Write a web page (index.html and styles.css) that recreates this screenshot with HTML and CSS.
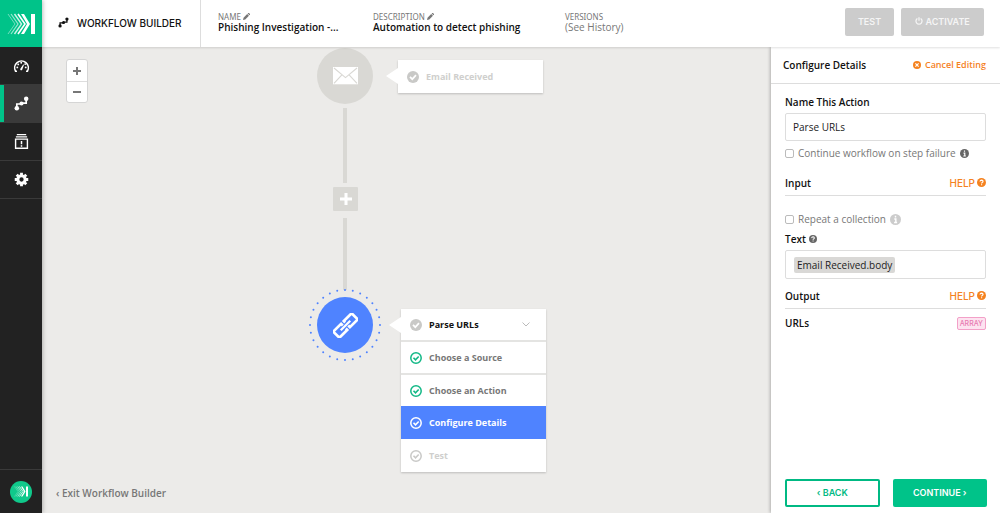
FILE: index.html
```html
<!DOCTYPE html>
<html lang="en">
<head>
<meta charset="UTF-8" />
<meta name="viewport" content="width=device-width, initial-scale=1" />
<title>Workflow Builder</title>
<link rel="stylesheet" href="styles.css">
</head>
<body>

<!-- shared icons -->
<svg class="sprite" aria-hidden="true">
  <symbol id="logo" viewBox="0 0 28 22">
    <g fill="none" stroke="currentColor">
      <path d="M1 1l7 10L1 21" stroke-width="1" opacity=".45" />
      <path d="M4 1l7 10L4 21" stroke-width="1.200" opacity=".6" />
      <path d="M7.500 1l7 10-7 10" stroke-width="1.400" opacity=".8" />
      <path d="M11 1l7 10-7 10" stroke-width="1.600" />
    </g>
    <path d="M14 1h3l6 10-6 10h-3l6-10zM24 1h4v20h-4z" fill="currentColor" />
  </symbol>
  <symbol id="flow" viewBox="0 0 16 16">
    <path d="M3 12V8.500h5.500V7.500H13V4" fill="none" stroke="currentColor" stroke-width="1.800" />
    <circle cx="3" cy="13" r="2.400" fill="currentColor" />
    <circle cx="8" cy="8" r="2.200" fill="currentColor" />
    <circle cx="13" cy="3" r="2.400" fill="currentColor" />
  </symbol>
  <symbol id="check-solid" viewBox="0 0 12 12">
    <circle cx="6" cy="6" r="6" fill="currentColor" />
    <path d="M3 5.800l2.300 2.400L9 4.200" fill="none" stroke="#fff" stroke-width="1.700" />
  </symbol>
  <symbol id="check-ring" viewBox="0 0 12 12">
    <circle cx="6" cy="6" r="5.200" fill="none" stroke="currentColor" stroke-width="1.500" />
    <path d="M3.500 5.800l2 2L8.700 4.500" fill="none" stroke="currentColor" stroke-width="1.600" />
  </symbol>
  <symbol id="pencil" viewBox="0 0 8 8">
    <path d="M0 8l.6-2.600L4.800 1.200l2 2L2.600 7.400zM5.300.7L6 0q.4-.3.800 0l1.200 1.200q.3.400 0 .8l-.7.7z" fill="currentColor" />
  </symbol>
  <symbol id="help" viewBox="0 0 10 10">
    <circle cx="5" cy="5" r="5" fill="currentColor" />
    <path d="M3.300 3.900q.2-1.600 1.800-1.600 1.600.1 1.600 1.400 0 .8-.9 1.200-.7.400-.7 1.100M5.100 6.900v1.200" fill="none" stroke="#fff" stroke-width="1.300" />
  </symbol>
  <symbol id="info" viewBox="0 0 10 10">
    <circle cx="5" cy="5" r="5" fill="currentColor" />
    <path d="M5 1.700v1.400M3.900 4.500H5.300V7.800M3.700 7.800h2.800" fill="none" stroke="#fff" stroke-width="1.300" />
  </symbol>
</svg>

<div class="app">
  <nav class="sidebar">
    <a class="brand" href="#" aria-label="Home"><svg><use href="#logo" /></svg></a>
    <a class="nav-item" href="#" aria-label="Dashboard">
      <svg viewBox="0 0 18 16">
        <path d="M4.200 14.200H2.700A7.300 7.300 0 1 1 15.300 14.200H13.800" fill="none" stroke="currentColor" stroke-width="1.700" />
        <path d="M7.600 11.800l3.200-5 .9.500-2.100 5.500a1.200 1.200 0 0 1-2-1z" fill="currentColor" />
        <g fill="currentColor"><circle cx="4.500" cy="10" r="1" /><circle cx="5.500" cy="6.800" r="1" /><circle cx="8.700" cy="5" r="1" /><circle cx="13.500" cy="10" r="1" /><circle cx="12.900" cy="6.500" r="1" /></g>
      </svg>
    </a>
    <a class="nav-item active" href="#" aria-label="Workflows"><svg><use href="#flow" /></svg></a>
    <a class="nav-item" href="#" aria-label="Cases">
      <svg viewBox="0 0 16 16" fill="none" stroke="currentColor">
        <path d="M3 .7h10M2 3h12" stroke-width="1.200" />
        <path d="M1.700 5.500h12.600v9.700H1.700z" stroke-width="1.500" />
        <path d="M8 7.500v3.500M8 12v1.500" stroke-width="1.600" />
      </svg>
    </a>
    <a class="nav-item" href="#" aria-label="Settings">
      <svg viewBox="0 0 16 16">
        <circle cx="8" cy="8" r="3.900" fill="none" stroke="currentColor" stroke-width="3.200" />
        <path d="M8 .8v2.400M8 12.800v2.400M.8 8h2.400M12.800 8h2.400M2.900 2.900l1.700 1.700M11.400 11.400l1.700 1.700M2.900 13.100l1.700-1.700M11.400 4.600l1.700-1.700" stroke="currentColor" stroke-width="3" />
      </svg>
    </a>
    <a class="account" href="#" aria-label="Account"><span class="avatar"><svg><use href="#logo" /></svg></span></a>
  </nav>

  <header class="topbar">
    <div class="page-title">
      <svg><use href="#flow" /></svg>
      <h1>WORKFLOW BUILDER</h1>
    </div>
    <dl class="meta">
      <div class="meta-item">
        <dt>NAME <svg><use href="#pencil" /></svg></dt>
        <dd>Phishing Investigation -...</dd>
      </div>
      <div class="meta-item wide">
        <dt>DESCRIPTION <svg><use href="#pencil" /></svg></dt>
        <dd>Automation to detect phishing</dd>
      </div>
      <div class="meta-item">
        <dt>VERSIONS</dt>
        <dd><a href="#">(See History)</a></dd>
      </div>
    </dl>
    <div class="top-actions">
      <button type="button" class="btn btn-muted">TEST</button>
      <button type="button" class="btn btn-muted">
        <svg viewBox="0 0 10 10" fill="none" stroke="currentColor" stroke-width="1.600"><path d="M3 1.900a3.800 3.800 0 1 0 4 0M5 .3v4.500" /></svg>
        ACTIVATE
      </button>
    </div>
  </header>

  <main class="canvas">
    <div class="zoom-controls">
      <button type="button" aria-label="Zoom in"><svg viewBox="0 0 10 10"><path d="M5 1v8M1 5h8" /></svg></button>
      <button type="button" aria-label="Zoom out"><svg viewBox="0 0 10 10"><path d="M1 5h8" /></svg></button>
    </div>

    <div class="node node-email">
      <svg viewBox="0 0 26 18">
        <path d="M0 0h26v18H0z" fill="#fff" />
        <path d="M1 1l12 10L25 1M1 17l8.500-9M25 17l-8.500-9" fill="none" stroke="#d9d8d4" stroke-width="1.200" />
      </svg>
    </div>
    <div class="link link-top"></div>
    <button type="button" class="add-step" aria-label="Add step"><svg viewBox="0 0 12 12"><path d="M6 0v12M0 6h12" /></svg></button>
    <div class="link link-bottom"></div>
    <div class="node node-parse">
      <svg class="ring" viewBox="0 0 72 72"><circle cx="36" cy="36" r="35" pathLength="28" /></svg>
      <svg viewBox="0 0 26 26" fill="none" stroke="#fff" stroke-width="2.800">
        <g transform="rotate(-45 13 13)">
          <path d="M11 11V8.500H-.5v9H11V15.500M15 15v2.500h11.500v-9H15v2" />
          <path d="M6 13h14" stroke-width="2.400" />
        </g>
      </svg>
    </div>

    <div class="step-card card-email">
      <div class="step faded"><svg><use href="#check-solid" /></svg>Email Received</div>
    </div>

    <div class="step-card card-parse">
      <div class="step current">
        <svg><use href="#check-solid" /></svg>Parse URLs
        <svg class="chevron" viewBox="0 0 8 5"><path d="M.5.5L4 4 7.500.5" /></svg>
      </div>
      <div class="step done"><svg><use href="#check-ring" /></svg>Choose a Source</div>
      <div class="step done"><svg><use href="#check-ring" /></svg>Choose an Action</div>
      <div class="step selected"><svg><use href="#check-ring" /></svg>Configure Details</div>
      <div class="step faded"><svg><use href="#check-ring" /></svg>Test</div>
    </div>

    <a class="exit" href="#">‹ Exit Workflow Builder</a>
  </main>

  <aside class="panel">
    <div class="panel-head">
      <h2>Configure Details</h2>
      <a href="#">
        <svg viewBox="0 0 10 10"><circle cx="5" cy="5" r="5" fill="currentColor" /><path d="M3 3l4 4M7 3L3 7" stroke="#fff" stroke-width="1.500" /></svg>
        Cancel Editing
      </a>
    </div>

    <form class="panel-body">
      <label class="field-label" for="action-name">Name This Action</label>
      <input type="text" id="action-name" value="Parse URLs" />
      <label class="check"><input type="checkbox" />Continue workflow on step failure <svg class="dark"><use href="#info" /></svg></label>

      <div class="section-head input-head">
        <h3>Input</h3>
        <a href="#">HELP <svg><use href="#help" /></svg></a>
      </div>
      <label class="check repeat"><input type="checkbox" />Repeat a collection <svg class="light"><use href="#info" /></svg></label>
      <span class="field-label" id="text-label">Text <svg><use href="#help" /></svg></span>
      <div class="token-box" role="textbox" aria-labelledby="text-label" contenteditable="true"><span class="token">Email Received.body</span></div>

      <div class="section-head">
        <h3>Output</h3>
        <a href="#">HELP <svg><use href="#help" /></svg></a>
      </div>
      <div class="output-row"><span>URLs</span><span class="tag">ARRAY</span></div>
    </form>

    <div class="panel-foot">
      <button type="button" class="btn btn-outline">‹ BACK</button>
      <button type="button" class="btn btn-primary">CONTINUE ›</button>
    </div>
  </aside>
</div>

</body>
</html>
```
FILE: styles.css
```css
* {
  box-sizing: border-box;
}
body {
  margin: 0;
  font-family: "Open Sans", "Noto Sans", sans-serif;
  font-size: 10px;
  line-height: 14px;
  color: #111;
}
h1, h2, h3, dl, dd {
  margin: 0;
}
a {
  color: inherit;
  text-decoration: none;
}
button, input {
  font: inherit;
}
button {
  cursor: pointer;
}
svg {
  flex: none;
}
.sprite {
  display: none;
}
.app {
  display: grid;
  grid-template-columns: 42px 1fr 229px;
  grid-template-rows: 47px 1fr;
  height: 100vh;
}

/* Sidebar */
.sidebar {
  grid-row: 1 / 3;
  display: flex;
  flex-direction: column;
  background: #222;
  color: #fff;
  box-shadow: 1px 0 4px rgba(0,0,0,0.25);
  z-index: 3;
}
.brand {
  height: 47px;
  display: flex;
  align-items: center;
  justify-content: center;
  background: #00c389;
}
.brand svg {
  width: 28px;
  height: 22px;
}
.nav-item {
  height: 38px;
  display: flex;
  align-items: center;
  justify-content: center;
  border-bottom: 1px solid #3a3a3a;
}
.nav-item svg {
  width: 17px;
  height: 15px;
}
.nav-item.active {
  background: #3a3a3a;
  box-shadow: inset 4px 0 #00c389;
}
.account {
  margin-top: auto;
  height: 44px;
  display: flex;
  align-items: center;
  justify-content: center;
  border-top: 1px solid #3a3a3a;
}
.avatar {
  width: 22px;
  height: 22px;
  display: flex;
  align-items: center;
  justify-content: center;
  border-radius: 50%;
  background: #10c98b;
}
.avatar svg {
  width: 14px;
  height: 11px;
}

/* Top bar */
.topbar {
  grid-column: 2 / 4;
  display: flex;
  background: #fff;
  box-shadow: 0 1px 2px rgba(0,0,0,0.12);
  z-index: 2;
}
.page-title {
  width: 159px;
  display: flex;
  align-items: center;
  gap: 8px;
  padding-left: 16px;
  padding-bottom: 2px;
  border-right: 1px solid #ddd;
}
.page-title svg {
  width: 11px;
  height: 11px;
}
.page-title h1 {
  font-family: Inter, sans-serif;
  font-size: 10px;
  font-weight: 500;
  white-space: nowrap;
}
.meta {
  display: flex;
  gap: 35px;
  padding: 11px 0 0 17px;
  white-space: nowrap;
}
.meta-item {
  width: 120px;
}
.meta-item.wide {
  width: 157px;
}
.meta dt {
  font-family: "Noto Sans", sans-serif;
  font-size: 8px;
  line-height: 11px;
  color: #777;
}
.meta dt svg {
  width: 7px;
  height: 7px;
}
.meta dd {
  line-height: 11px;
  font-weight: 600;
}
.meta dd a {
  color: #777;
  font-weight: 500;
}
.btn {
  height: 28px;
  padding: 0;
  border: 0;
  border-radius: 2px;
  font-family: Inter, sans-serif;
  font-size: 9px;
  font-weight: 600;
}
.top-actions {
  display: flex;
  gap: 7px;
  margin-left: auto;
  padding: 8px 16px 0 0;
}
.btn-muted {
  width: 49px;
  background: #ccc;
  color: #f5f5f5;
}
.btn-muted + .btn-muted {
  width: 83px;
}
.btn-muted svg {
  width: 8px;
  height: 8px;
}

/* Canvas */
.canvas {
  position: relative;
  overflow: hidden;
  background: #ecebe9;
}
.zoom-controls {
  position: absolute;
  left: 24px;
  top: 12px;
  display: flex;
  flex-direction: column;
  width: 22px;
  background: #fff;
  border: 1px solid #d5d5d5;
  border-radius: 3px;
}
.zoom-controls button {
  height: 21px;
  padding: 0;
  display: flex;
  align-items: center;
  justify-content: center;
  border: 0;
  background: none;
}
.zoom-controls button + button {
  border-top: 1px solid #ddd;
}
.zoom-controls svg {
  width: 10px;
  height: 10px;
  stroke: #777;
  stroke-width: 2;
}
.node {
  position: absolute;
  left: 275px;
  width: 56px;
  height: 56px;
  display: flex;
  align-items: center;
  justify-content: center;
  border-radius: 50%;
}
.node-email {
  top: 1px;
  background: #d9d8d4;
}
.node-parse {
  top: 250px;
  background: #4f83ff;
}
.node svg {
  width: 25px;
}
.node .ring {
  position: absolute;
  left: -8px;
  top: -8px;
  width: 72px;
  height: 72px;
  overflow: visible;
  fill: none;
  stroke: #4f83ff;
  stroke-width: 2;
  stroke-linecap: round;
  stroke-dasharray: 0 1;
}
.link {
  position: absolute;
  left: 301px;
  width: 4px;
  background: #d9d8d4;
}
.link-top {
  top: 61px;
  height: 75px;
}
.link-bottom {
  top: 171px;
  height: 72px;
}
.add-step {
  position: absolute;
  left: 291px;
  top: 140px;
  width: 25px;
  height: 24px;
  padding: 0;
  display: flex;
  align-items: center;
  justify-content: center;
  border: 0;
  border-radius: 1px;
  background: #d9d8d4;
}
.add-step svg {
  width: 12px;
  height: 12px;
  stroke: #fff;
  stroke-width: 3;
}
.step-card {
  position: absolute;
  width: 145px;
  background: #fff;
  box-shadow: 0 1px 2px rgba(0,0,0,0.2);
}
.step-card::before {
  content: "";
  position: absolute;
  left: -12px;
  top: 8px;
  border: solid transparent;
  border-width: 8px 12px 8px 0;
  border-right-color: #fff;
}
.card-email {
  left: 356px;
  top: 13px;
}
.card-parse {
  left: 359px;
  top: 262px;
}
.step {
  height: 33px;
  display: flex;
  align-items: center;
  gap: 7px;
  padding: 0 16px 0 9px;
  font-size: 9px;
  font-weight: 700;
}
.step svg {
  width: 12px;
  height: 12px;
  color: #c9c9c7;
}
.step.current,
.step.done {
  border-bottom: 2px solid #e4e4e2;
}
.step.done {
  color: #777;
}
.step.done svg {
  color: #12b886;
}
.step.faded {
  color: #cfcfcd;
}
/* covers the divider of the row above */
.step.selected {
  margin-top: -2px;
  background: #4f83ff;
  color: #fff;
}
.step.selected svg {
  color: #fff;
}
.step .chevron {
  width: 8px;
  height: 5px;
  margin-left: auto;
  fill: none;
  stroke: #bbb;
}
.exit {
  position: absolute;
  left: 14px;
  bottom: 13px;
  font-weight: 600;
  color: #777;
}

/* Details panel */
.panel {
  display: flex;
  flex-direction: column;
  background: #fff;
  box-shadow: -1px 0 3px rgba(0,0,0,0.25);
  z-index: 1;
}
.panel-head {
  height: 37px;
  display: flex;
  align-items: center;
  justify-content: space-between;
  padding: 0 14px 0 12px;
  border-bottom: 1px solid #ddd;
}
.panel h2, .panel h3 {
  font-size: 10px;
  font-weight: 600;
}
.panel-head a {
  display: flex;
  align-items: center;
  gap: 4px;
  font-size: 9px;
  font-weight: 600;
  color: #f5821f;
}
.panel-head a svg {
  width: 8px;
  height: 8px;
}
.panel-body {
  flex: 1;
  padding: 11px 14px 0;
}
.field-label {
  display: flex;
  align-items: center;
  gap: 3px;
  margin-bottom: 4px;
  font-weight: 600;
}
.field-label svg {
  width: 8px;
  height: 8px;
  color: #666;
}
.panel-body input[type="text"] {
  display: block;
  width: 100%;
  height: 28px;
  padding: 0 7px;
  border: 1px solid #ddd;
  border-radius: 2px;
  color: #222;
}
.check {
  display: flex;
  align-items: center;
  gap: 4px;
  margin-top: 5px;
  color: #777;
}
.check input {
  appearance: none;
  width: 9px;
  height: 9px;
  margin: 0;
  border: 1px solid #bbb;
  border-radius: 2px;
  background: #fff;
}
.check input:checked {
  background: #00c389;
}
.check svg {
  width: 9px;
  height: 9px;
}
.check .dark {
  color: #666;
}
.check .light {
  width: 11px;
  height: 11px;
  color: #ccc;
}
.section-head {
  display: flex;
  align-items: center;
  justify-content: space-between;
  margin-top: 9px;
  height: 21px;
  padding-bottom: 5px;
  border-bottom: 1px solid #ddd;
}
.input-head {
  margin-top: 15px;
}
.section-head a {
  display: flex;
  align-items: center;
  gap: 2px;
  font-family: Inter, sans-serif;
  font-weight: 500;
  color: #f5821f;
}
.section-head svg {
  width: 9px;
  height: 9px;
}
.repeat {
  margin: 16px 0 6px;
}
.token-box {
  height: 29px;
  display: flex;
  align-items: center;
  padding: 0 8px;
  border: 1px solid #ddd;
  border-radius: 2px;
}
.token {
  padding: 1px 3px;
  border-radius: 2px;
  background: #d9d8d6;
  color: #222;
}
.output-row {
  display: flex;
  align-items: center;
  justify-content: space-between;
  margin-top: 7px;
  font-weight: 600;
}
.tag {
  padding: 0 2px;
  border: 1px solid #f3a0c8;
  border-radius: 2px;
  background: #fde3f0;
  font-family: Inter, sans-serif;
  font-size: 7px;
  line-height: 11px;
  font-weight: 500;
  color: #e87bb0;
}
.panel-foot {
  display: grid;
  grid-template-columns: 1fr 1fr;
  gap: 13px;
  padding: 0 13px 6px 14px;
}
.btn-outline {
  border: 2px solid #00b983;
  background: #fff;
  color: #00b983;
}
.btn-primary {
  background: #00c389;
  color: #fff;
}
```
